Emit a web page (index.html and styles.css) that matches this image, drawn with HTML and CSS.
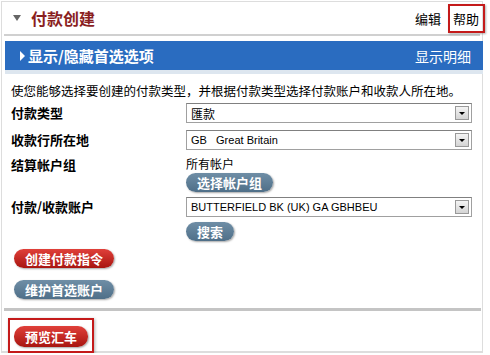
FILE: index.html
```html
<!DOCTYPE html>
<html lang="zh-CN">
<head>
<meta charset="UTF-8">
<title>付款创建</title>
<link rel="stylesheet" href="styles.css">
</head>
<body>
    <div class="frame">
        <div class="header">
            <div class="title"><span class="tri"></span>付款创建</div>
            <div class="tools">
                <span class="tool">编辑</span>
                <span class="tool help">帮助</span>
            </div>
        </div>

        <div class="bar">
            <span class="bar-left"><span class="arrow"></span>显示/隐藏首选选项</span>
            <span class="bar-right">显示明细</span>
        </div>

        <p class="intro">使您能够选择要创建的付款类型，并根据付款类型选择付款账户和收款人所在地。</p>

        <div class="row">
            <label class="lbl">付款类型</label>
            <div class="field">
                <div class="select"><span class="val">匯款</span><span class="drop"></span></div>
            </div>
        </div>
        <div class="row">
            <label class="lbl">收款行所在地</label>
            <div class="field">
                <div class="select"><span class="val latin">GB&nbsp;&nbsp;&nbsp;Great Britain</span><span class="drop"></span></div>
            </div>
        </div>
        <div class="row row-group">
            <label class="lbl">结算帐户组</label>
            <div class="field">
                <div class="plain">所有帐户</div>
                <span class="btn grey">选择帐户组</span>
            </div>
        </div>
        <div class="row row-account">
            <label class="lbl">付款/收款账户</label>
            <div class="field">
                <div class="select"><span class="val latin">BUTTERFIELD BK (UK) GA GBHBEU</span><span class="drop"></span></div>
                <span class="btn grey">搜索</span>
            </div>
        </div>

        <div class="actions">
            <span class="btn red">创建付款指令</span>
            <span class="btn grey">维护首选账户</span>
        </div>

        <div class="footer">
            <span class="outline"><span class="btn red">预览汇车</span></span>
        </div>
    </div>
</body>
</html>
```

FILE: styles.css
```css
body {
    margin: 0;
    background-color: #ffffff;
    font-family: "Noto Sans CJK SC", "Liberation Sans", sans-serif;
    color: #000000;
}
.frame {
    width: 482px;
    height: 352px;
    margin: 1px 0 0 1px;
    border: 1px solid #dddddd;
    border-bottom-width: 2px;
    box-sizing: border-box;
}
.header {
    display: flex;
    justify-content: space-between;
    align-items: center;
    height: 32px;
    border-bottom: 2px solid #d0d0d0;
    margin: 0 2px;
}
.title {
    display: flex;
    align-items: center;
    font-size: 16px;
    font-weight: bold;
    color: #8a1f1f;
    padding-left: 9px;
}
.tri {
    width: 0;
    height: 0;
    border-left: 4px solid transparent;
    border-right: 4px solid transparent;
    border-top: 6px solid #666666;
    margin-right: 10px;
}
.tools {
    display: flex;
    align-items: center;
    font-size: 13px;
    margin-right: -5px;
}
.tool {
    padding: 0 3px;
}
.help {
    margin-left: 4px;
    border: 2px solid #c41a1a;
    padding: 3px 4px 3px 3px;
    box-shadow: 1px 1px 2px rgba(0, 0, 0, 0.3);
}
.bar {
    display: flex;
    justify-content: space-between;
    align-items: center;
    height: 29px;
    margin: 5px 0 0 3px;
    width: 478px;
    background-color: #2a6cc0;
    color: #ffffff;
    border-bottom: 4px solid #dde6ef;
}
.bar-left {
    display: flex;
    align-items: center;
    font-size: 15px;
    font-weight: bold;
    padding-left: 15px;
}
.arrow {
    width: 0;
    height: 0;
    border-top: 5px solid transparent;
    border-bottom: 5px solid transparent;
    border-left: 5px solid #ffffff;
    margin-right: 3px;
}
.bar-right {
    font-size: 14px;
    padding-right: 12px;
}
.intro {
    margin: 9px 0 4px 9px;
    font-size: 12.5px;
    line-height: 16px;
    white-space: nowrap;
}
.row {
    display: flex;
    padding-bottom: 7px;
}
.row-group {
    padding-bottom: 5px;
}
.row-group .lbl {
    line-height: 15px;
}
.row-account {
    padding-bottom: 8px;
}
.lbl {
    width: 175px;
    padding-left: 9px;
    font-size: 13px;
    font-weight: bold;
    line-height: 20px;
}
.field {
    display: flex;
    flex-direction: column;
    align-items: flex-start;
    gap: 2px;
}
.row-account .field {
    gap: 5px;
}
.select {
    display: flex;
    align-items: center;
    justify-content: space-between;
    width: 286px;
    height: 20px;
    box-sizing: border-box;
    border: 1px solid #a0a0a0;
    border-top-color: #808080;
    background-color: #ffffff;
}
.val {
    font-size: 12px;
    padding-left: 4px;
}
.latin {
    font-family: "Liberation Sans", Arial, sans-serif;
    font-size: 11px;
}
.drop {
    width: 14px;
    height: 14px;
    margin-right: 2px;
    box-sizing: border-box;
    border: 1px solid #999999;
    background: linear-gradient(#f4f4f4, #d4d4d4);
    position: relative;
}
.drop::after {
    content: "";
    position: absolute;
    left: 3px;
    top: 5px;
    border-left: 3px solid transparent;
    border-right: 3px solid transparent;
    border-top: 3px solid #000000;
}
.plain {
    font-size: 12px;
    line-height: 14px;
}
.btn {
    display: inline-block;
    font-size: 13px;
    font-weight: bold;
    color: #ffffff;
    line-height: 19px;
    padding: 0 11px;
    border-radius: 10px;
    box-shadow: 1px 1px 2px rgba(0, 0, 0, 0.35);
}
.grey {
    background: linear-gradient(#6f8ea6, #4f6f88);
}
.red {
    background: linear-gradient(#e0403a, #a81510);
}
.actions {
    display: flex;
    flex-direction: column;
    align-items: flex-start;
    gap: 12px;
    margin: 0 0 0 12px;
}
.footer {
    margin: 9px 2px 0 2px;
    border-top: 3px solid #c4c4c4;
    padding: 7px 0 0 4px;
    width: 473px;
}
.outline {
    display: inline-block;
    border: 2px solid #c41a1a;
    padding: 3px 4px 4px 4px;
    box-shadow: 1px 1px 3px rgba(0, 0, 0, 0.3);
}
.outline .btn {
    line-height: 21px;
}
```
